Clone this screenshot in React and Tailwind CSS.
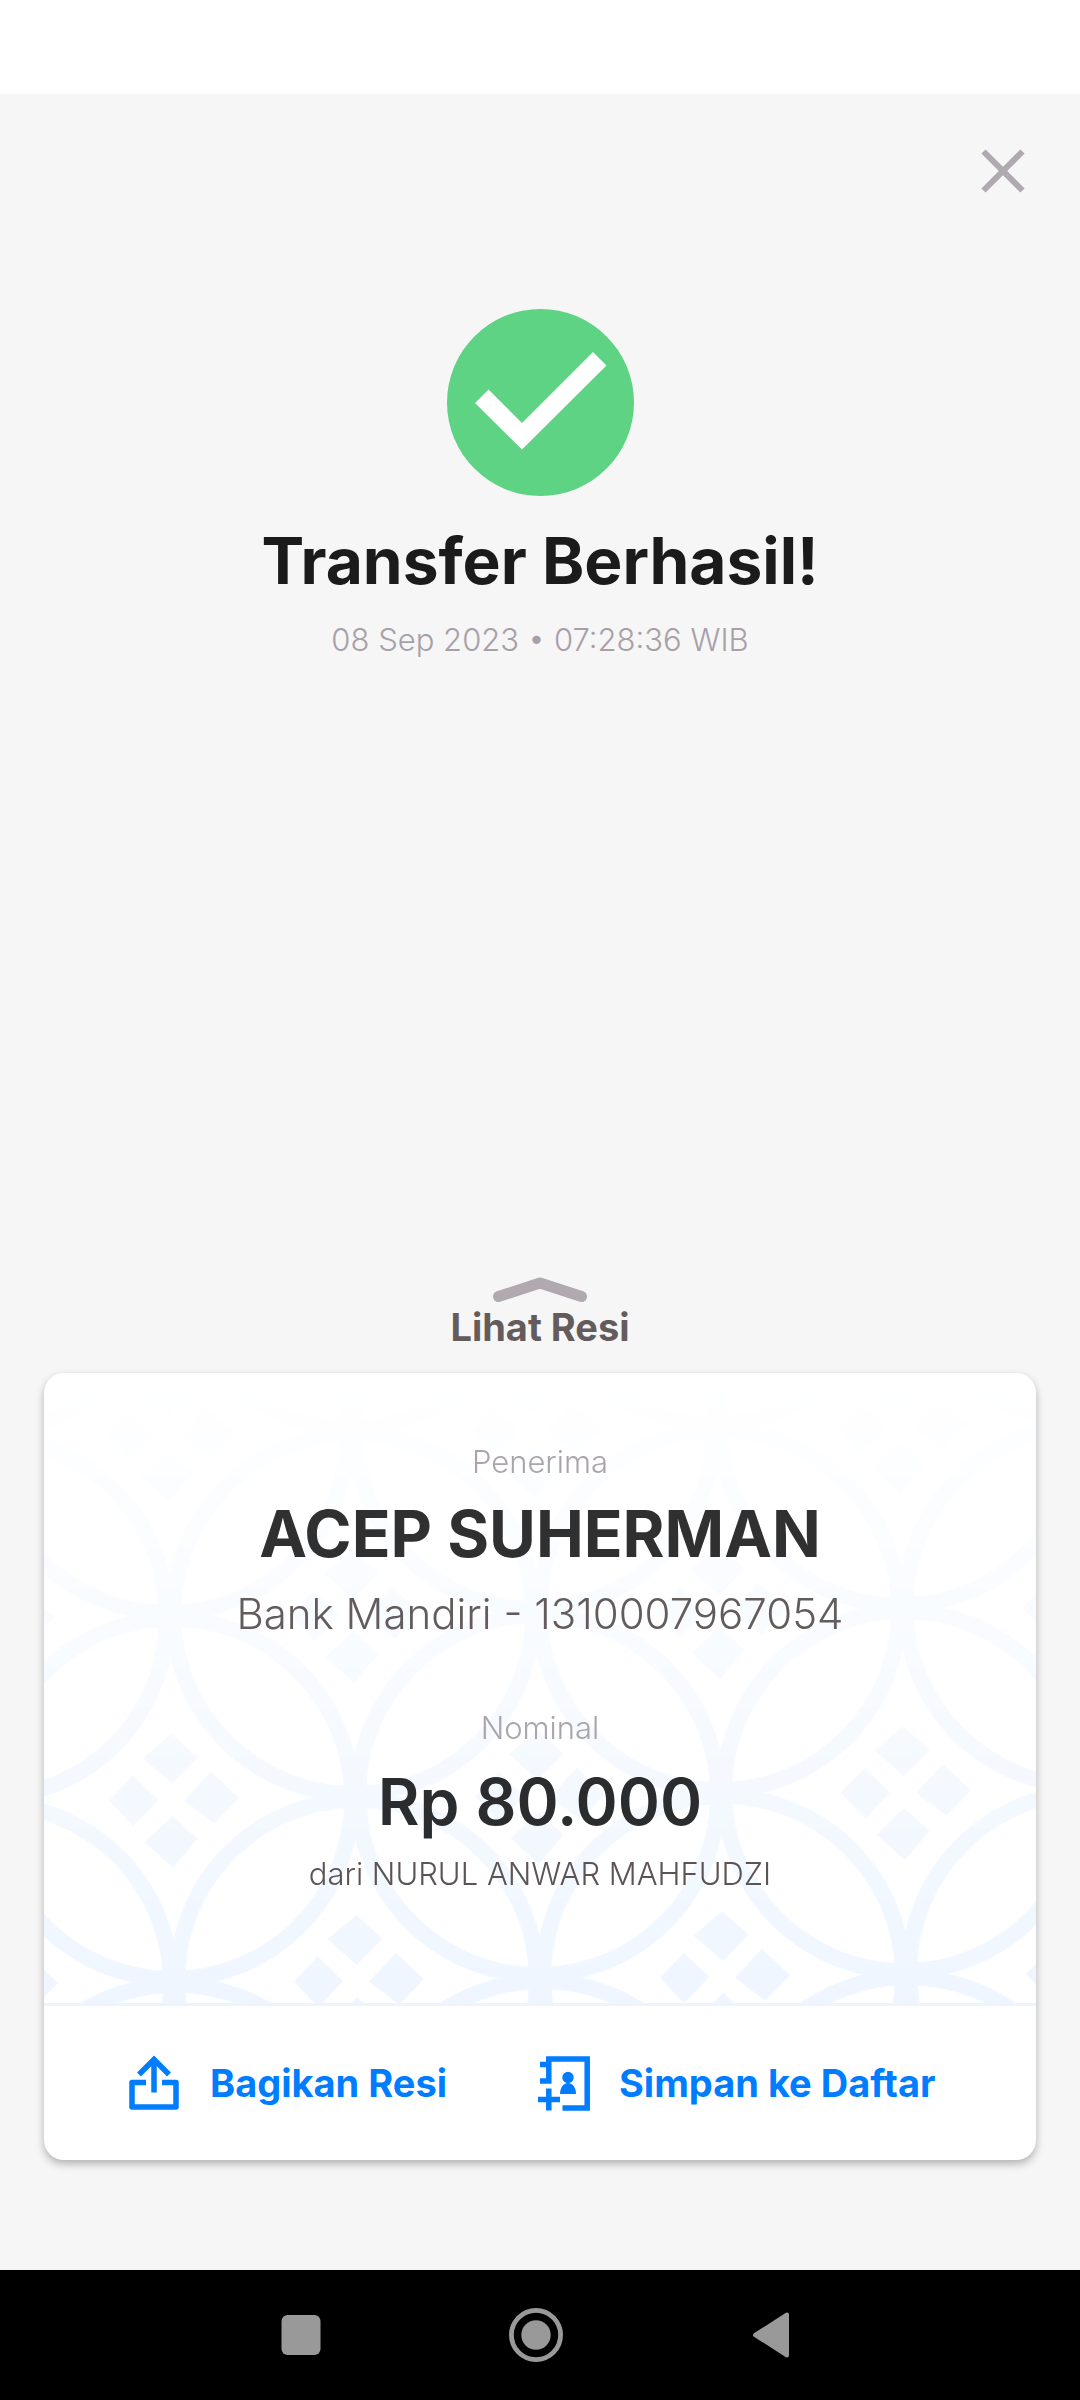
import React from "react";

const TILE = 183;

// kawung motif: circles and diamond clusters on every other grid point
function motifCenters() {
  const points = [];
  for (let row = -4; row <= 1; row++) {
    for (let col = -4; col <= 4; col++) {
      if ((row + col) % 2 !== 0) {
        points.push({ x: 496 + col * TILE, y: 606 + row * TILE });
      }
    }
  }
  return points;
}

function CardPattern() {
  return (
    <svg
      className="absolute inset-0 h-full w-full"
      viewBox="0 0 992 631"
      preserveAspectRatio="xMidYMax slice"
      fill="none"
      aria-hidden="true"
    >
      <defs>
        <linearGradient id="fade" x1="0" y1="0" x2="0" y2="631" gradientUnits="userSpaceOnUse">
          <stop offset="0" stopColor="#fff" stopOpacity="0" />
          <stop offset="1" stopColor="#fff" />
        </linearGradient>
        <mask id="fadeMask" maskUnits="userSpaceOnUse" x="0" y="0" width="992" height="631">
          <rect width="992" height="631" fill="url(#fade)" />
        </mask>
      </defs>
      <g mask="url(#fadeMask)">
        <g transform="rotate(-0.6 496 606)">
          {motifCenters().map(({ x, y }) => (
            <g key={`${x}-${y}`} transform={`translate(${x} ${y})`}>
              <circle r="180" stroke="#eff6ff" strokeWidth="16" />
              <path
                d="M0-65l26 24L0-15l-29-26zM-39-24l25 25-25 26-24-26zM39-27l28 27-25 25-30-23zM0 17l25 23L0 69l-28-26z"
                fill="#eff6ff"
              />
            </g>
          ))}
        </g>
      </g>
    </svg>
  );
}

function ShareIcon() {
  return (
    <svg className="h-14 w-[52px]" viewBox="0 0 52 56" fill="none" stroke="currentColor" aria-hidden="true">
      <path d="M17 27.500H3V52h44V27.500H33" strokeWidth="5.500" strokeLinejoin="round" />
      <path d="M25 37.500V5M10 19.500l15-15 15 15" strokeWidth="5.500" />
    </svg>
  );
}

function ContactBookIcon() {
  return (
    <svg className="h-14 w-[52px]" viewBox="0 0 52 56" fill="none" aria-hidden="true">
      <path
        d="M2 9.500h9M2 26h11.500M10.800 28V4h38.400v49H24.500M0 44.500h22M10.800 33.500v22"
        stroke="currentColor"
        strokeWidth="5.500"
      />
      <circle cx="30" cy="22.500" r="5.700" fill="currentColor" />
      <path d="M22 39c0-6 3-11 8-11s8 5 8 11z" fill="currentColor" />
    </svg>
  );
}

function App() {
  return (
    <div className="flex min-h-screen flex-col bg-[#f6f6f6] font-['Inter','Noto_Sans',sans-serif]">
      <div className="h-[94px] bg-white" />

      <main className="flex flex-1 flex-col px-11 pt-11 pb-[110px]">
        <div className="flex justify-end">
          <button type="button" aria-label="Tutup" className="cursor-pointer text-[#b0a9b0]">
            <svg className="size-[66px]" viewBox="0 0 66 66" stroke="currentColor" strokeWidth="6">
              <path d="M13.500 13.500l39 39M52.500 13.500l-39 39" />
            </svg>
          </button>
        </div>

        <section className="mt-[105px] flex flex-col items-center">
          <svg className="size-[187px]" viewBox="0 0 187 187" aria-hidden="true">
            <circle cx="93.500" cy="93.500" r="93.500" fill="#5dd383" />
            <path d="M28 94l13.500-13.500L75 114l71-71 13.500 13.500L75 140.500z" fill="#fff" />
          </svg>
          <h1 className="mt-6 text-[64px] leading-[82px] font-bold text-[#1b1b1b]">Transfer Berhasil!</h1>
          <p className="mt-[14px] text-[31px] leading-[48px] font-light text-[#a8a0a8]">
            08 Sep 2023 • 07:28:36 WIB
          </p>
        </section>

        <button
          type="button"
          className="mt-auto flex cursor-pointer flex-col items-center self-center text-[38px] leading-[48px] font-bold text-[#645c5c]"
        >
          <svg className="h-[26px] w-[94px]" viewBox="0 0 94 26" fill="none" aria-hidden="true">
            <path
              d="M5.500 19.500L47 6l41.500 13.500"
              stroke="#b0a9b0"
              strokeWidth="11"
              strokeLinecap="round"
              strokeLinejoin="round"
            />
          </svg>
          Lihat Resi
        </button>

        <section className="mt-[22px] overflow-hidden rounded-[20px] bg-white shadow-[0_4px_8px_rgba(0,0,0,0.28)]">
          <div className="relative border-b-3 border-[#eef4fe]">
            <CardPattern />
            <div className="relative flex flex-col items-center pt-[69px] pb-[109px] text-center">
              <p className="text-[31px] leading-[40px] font-light text-[#aaa4ac]">Penerima</p>
              <p className="mt-5 text-[64px] leading-[64px] font-bold text-[#303030]">ACEP SUHERMAN</p>
              <p className="mt-6 text-[42px] leading-[48px] font-light text-[#625c5c]">
                Bank Mandiri - 1310007967054
              </p>
              <p className="mt-[70px] text-[31px] leading-[40px] font-light text-[#aaa4ac]">Nominal</p>
              <p className="mt-[22px] text-[64px] leading-[64px] font-semibold text-[#2b2c2e]">Rp 80.000</p>
              <p className="mt-5 text-[31px] leading-[40px] font-light text-[#5c5454]">
                dari NURUL ANWAR MAHFUDZI
              </p>
            </div>
          </div>

          <div className="flex h-[154px] items-center gap-[91px] pl-[85px] text-[38px] leading-[48px] font-bold text-[#007dff]">
            <button type="button" className="flex cursor-pointer items-center gap-[29px]">
              <ShareIcon />
              Bagikan Resi
            </button>
            <button type="button" className="flex cursor-pointer items-center gap-[29px]">
              <ContactBookIcon />
              Simpan ke Daftar
            </button>
          </div>
        </section>
      </main>

      <nav className="flex h-[130px] items-center justify-center gap-[181px] bg-black pr-2 text-[#999]">
        <button type="button" aria-label="Aplikasi terbaru" className="cursor-pointer">
          <svg className="size-[54px]" viewBox="0 0 54 54" fill="currentColor">
            <rect x="7.500" y="7" width="39" height="40" rx="6" />
          </svg>
        </button>
        <button type="button" aria-label="Beranda" className="cursor-pointer">
          <svg className="size-[54px]" viewBox="0 0 54 54">
            <circle cx="27" cy="27" r="24.600" fill="none" stroke="currentColor" strokeWidth="4.800" />
            <circle cx="27" cy="27" r="14.700" fill="currentColor" />
          </svg>
        </button>
        <button type="button" aria-label="Kembali" className="cursor-pointer">
          <svg
            className="size-[54px]"
            viewBox="0 0 54 54"
            fill="currentColor"
            stroke="currentColor"
            strokeWidth="4"
            strokeLinejoin="round"
          >
            <path d="M43 6.500v41L11 27z" />
          </svg>
        </button>
      </nav>
    </div>
  );
}

export default App;
